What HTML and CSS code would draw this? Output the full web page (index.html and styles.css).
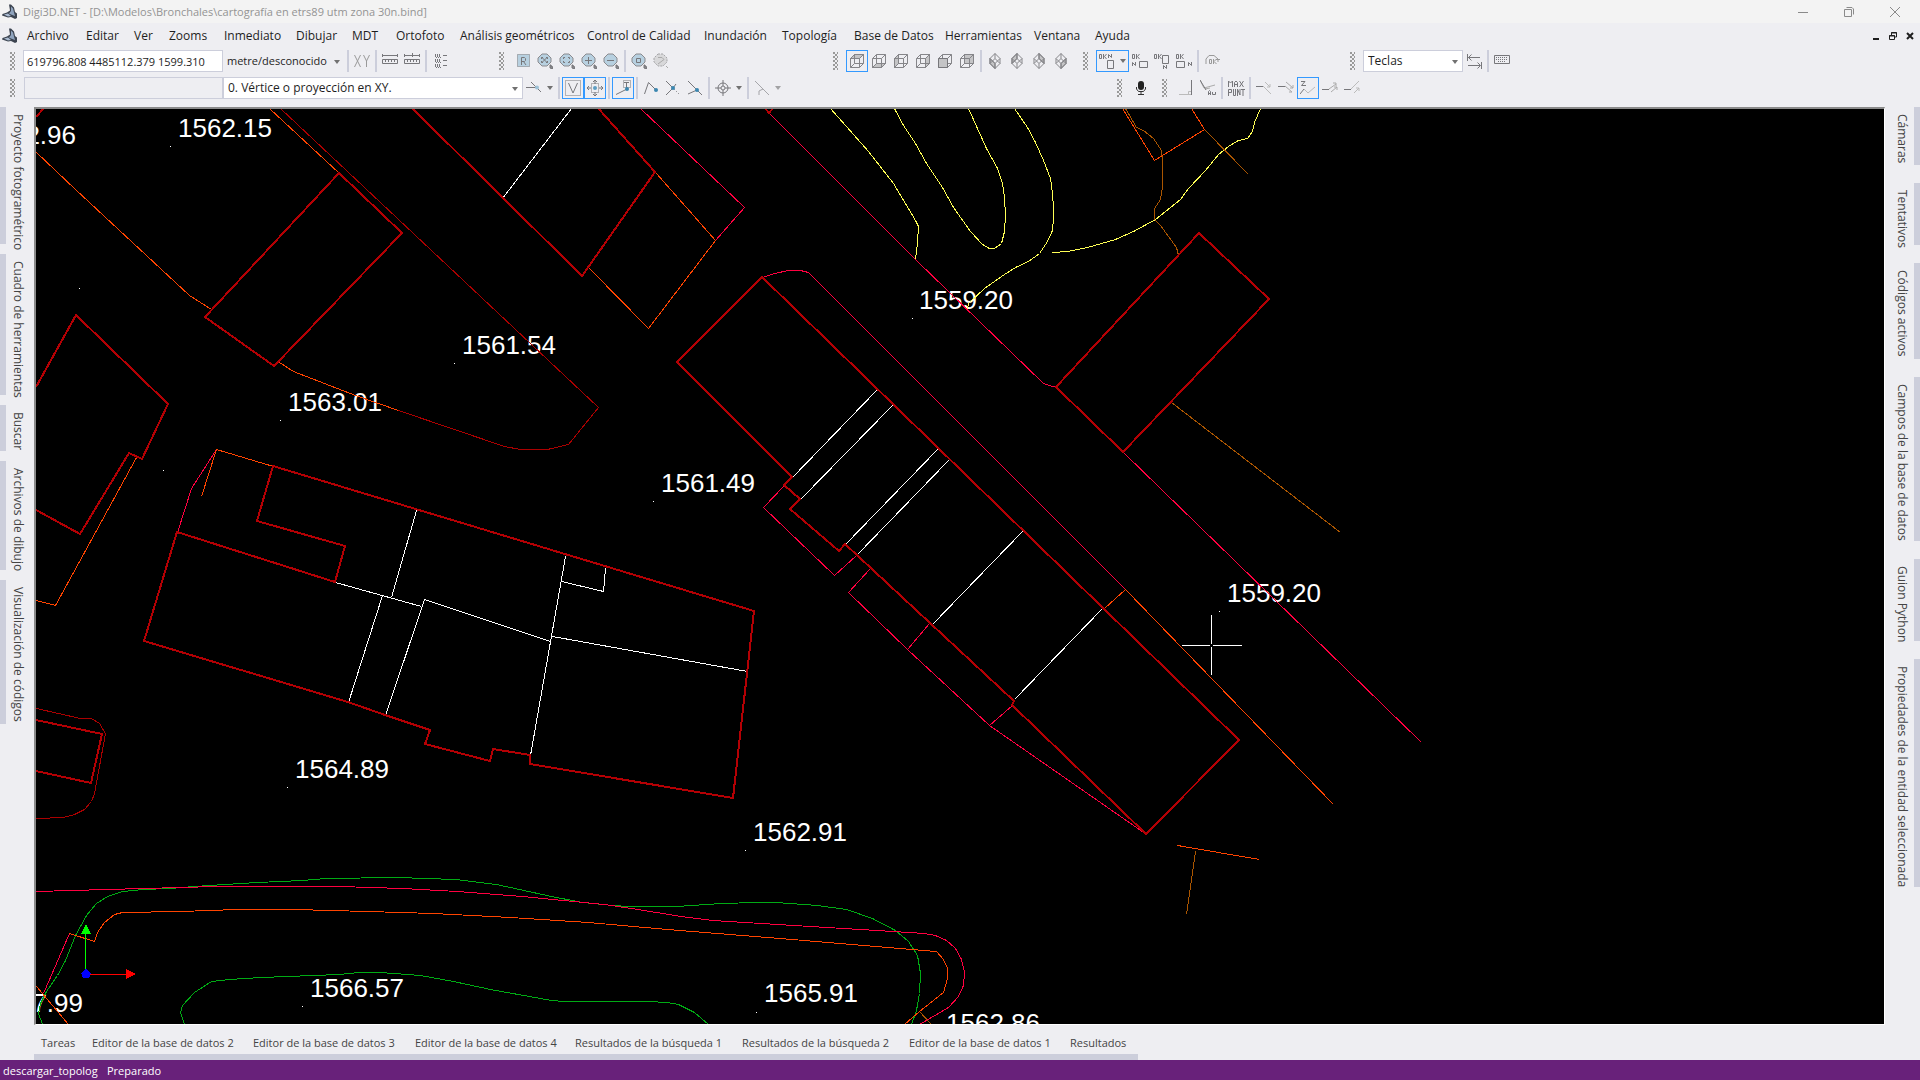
FILE: index.html
```html
<!DOCTYPE html>
<html lang="es">
<head>
<meta charset="utf-8">
<meta name="viewport" content="width=device-width, initial-scale=1">
<title>Digi3D.NET</title>
<link rel="stylesheet" href="styles.css">
</head>
<body>
<svg class="sprite" aria-hidden="true">
  <symbol id="logo" viewBox="0 0 16 16"><path d="M7 .5H9L12 3.500 13 8 15 9.500V14L13 15 9 13 6 13.500 0 11.500 .5 10 5 8.500 8 6.500Z" fill="#3c4450"/><path d="M9 2.500 11 4.500 12 8.500 13 12 9 10.500 7 9.500 9 7Z" fill="#8fa3bd"/><path d="M2 10.500 6 9.500 9 12 6 12.500Z" fill="#a9bad0"/></symbol>
  <symbol id="lens" viewBox="0 0 16 16"><path d="M5 1H10L14 5V9L10 13H5L1 9V5Z" fill="#b7d0e0" stroke="#8a8a8e"/><path d="M13 12h1v1h1v1h1v2h-2v-1h-1z" fill="#8a8a8e"/></symbol>
  <symbol id="cube" viewBox="0 0 16 16"><path d="M1.500 5.500H10.500V14.500H1.500ZM5.500 1.500H14.500V10.500H5.500ZM1.500 5.500 5.500 1.500M10.500 5.500 14.500 1.500M10.500 14.500 14.500 10.500M1.500 14.500 5.500 10.500" fill="none" stroke="#858589"/></symbol>
  <symbol id="gem" viewBox="0 0 16 16"><path d="M8 .5 13 5.500V10.500L8 15.500 3 10.500V5.500ZM3 5.500 8 10.500 13 5.500M3 10.500 8 5.500 13 10.500M8 .5V5.500M8 10.500V15.500" fill="none" stroke="#858589"/></symbol>
  <symbol id="okn" viewBox="0 0 16 16"><path d="M.5 1.500H2.500V5.500H.5ZM4.500 1V6M7.500 1 5.500 3.500 7.500 6" fill="none" stroke="#77777b"/></symbol>
</svg>

<div class="app">
  <header class="titlebar">
    <svg class="logo"><use href="#logo"/></svg>
    <span class="title">Digi3D.NET - [D:\Modelos\Bronchales\cartografía en etrs89 utm zona 30n.bind]</span>
    <div class="win">
      <button aria-label="Minimizar"><svg viewBox="0 0 12 12"><path d="M1 6.500H11"/></svg></button>
      <button aria-label="Restaurar"><svg viewBox="0 0 12 12"><path d="M1.500 3.500H8.500V10.500H1.500ZM3.500 1.500H9L10.500 3V8.500"/></svg></button>
      <button aria-label="Cerrar"><svg viewBox="0 0 12 12"><path d="M1 1 11 11M11 1 1 11"/></svg></button>
    </div>
  </header>

  <div class="menubar">
    <svg class="logo"><use href="#logo"/></svg>
    <nav class="menu">
      <button>Archivo</button><button>Editar</button><button>Ver</button><button>Zooms</button><button>Inmediato</button><button>Dibujar</button><button>MDT</button><button>Ortofoto</button><button>Análisis geométricos</button><button>Control de Calidad</button><button>Inundación</button><button>Topología</button><button>Base de Datos</button><button>Herramientas</button><button>Ventana</button><button>Ayuda</button>
    </nav>
    <div class="mdi">
      <button aria-label="Minimizar documento"><svg viewBox="0 0 10 10"><path d="M2 8H8" stroke-width="2"/></svg></button>
      <button aria-label="Restaurar documento"><svg viewBox="0 0 10 10"><path d="M1.500 4.500H6.500V8.500H1.500ZM3.500 4V1.500H8.500V6H7M1 5H7M3 2H9"/></svg></button>
      <button aria-label="Cerrar documento"><svg viewBox="0 0 10 10"><path d="M2 2 8 8M8 2 2 8" stroke-width="2"/></svg></button>
    </div>
  </div>

  <div class="tools tools-top">
    <div class="bar">
      <i class="grip"></i>
      <input class="coords" type="text" aria-label="Coordenadas" value="619796.808 4485112.379 1599.310">
      <span class="pick flat"><select aria-label="Unidades"><option>metre/desconocido</option></select></span>
      <i class="sep"></i>
      <button aria-label="XY"><svg viewBox="0 0 16 16"><path d="M.5 2 6.500 14M6.500 2 .5 14M9.500 2 12.500 8V14M15.500 2 12.500 8" stroke="#999"/></svg></button>
      <i class="sep"></i>
      <button aria-label="Regla"><svg viewBox="0 0 16 16"><path d="M0 2.500H16M.5 1V4M15.500 1V4M.5 6.500H15.500V10.500H.5ZM3.500 7V9M6.500 7V9M9.500 7V9M12.500 7V9"/></svg></button>
      <button aria-label="Regla parcial"><svg viewBox="0 0 16 16"><path d="M0 2.500H16M.5 1V4M8.500 0V4M15.500 1V4M.5 6.500H15.500V10.500H.5ZM3.500 7V9M6.500 7V9M9.500 7V9M12.500 7V9"/></svg></button>
      <i class="sep"></i>
      <button aria-label="Lista"><svg viewBox="0 0 16 16"><path d="M3 2.500H9M3 7.500H9M3 12.500H9" stroke-width="3" stroke-dasharray="1 1"/><path d="M4 4.500H9M4 9.500H9M4 14.500H9" stroke-dasharray="1 1"/><path d="M11 2.500H15M11 7.500H15M11 12.500H15"/></svg></button>
    </div>
    <div class="bar">
      <i class="grip"></i>
      <button aria-label="Redibujar"><svg viewBox="0 0 16 16"><path d="M2.500 1.500H14.500V13.500H2.500Z" fill="#b7d0e0" stroke-dasharray="1 1"/><path d="M6.500 12V4.500H9.500L10.500 5.500V7.500L9.500 8.500H6.500M8.500 8.500 11 12"/></svg></button>
      <button aria-label="Zoom extensión"><svg viewBox="0 0 16 16"><use href="#lens"/><path d="M4.500 4 10.500 10M10.500 4 4.500 10M4.500 6V4.500H6M9 4.500H10.500V6M4.500 8V9.500H6M9 9.500H10.500V8"/></svg></button>
      <button aria-label="Zoom ventana"><svg viewBox="0 0 16 16"><use href="#lens"/><path d="M4.500 6V4.500H6M9 4.500H10.500V6M4.500 8V9.500H6M9 9.500H10.500V8"/></svg></button>
      <button aria-label="Acercar"><svg viewBox="0 0 16 16"><use href="#lens"/><path d="M4 7.500H11M7.500 4V11"/></svg></button>
      <button aria-label="Alejar"><svg viewBox="0 0 16 16"><use href="#lens"/><path d="M4 7.500H11"/></svg></button>
      <i class="sep"></i>
      <button aria-label="Zoom centro"><svg viewBox="0 0 16 16"><use href="#lens"/><path d="M5.500 5.500H9.500V9.500H5.500Z"/></svg></button>
      <button aria-label="Zoom previo"><svg viewBox="0 0 16 16"><path d="M5 1H10L14 5V9L10 13H5L1 9V5Z" fill="#d8d8da" stroke="#a5a5a8" stroke-dasharray="2 1"/><path d="M5 4.500H9L11 6.500 5 11M13 13 15 15" stroke="#aaa"/></svg></button>
    </div>
    <div class="bar">
      <i class="grip"></i>
      <button class="on" aria-label="Vista superior"><svg viewBox="0 0 16 16"><path d="M1.500 5.500 5.500 1.500H14.500L10.500 5.500Z" fill="#c4c4c6"/><use href="#cube"/></svg></button>
      <button aria-label="Vista inferior"><svg viewBox="0 0 16 16"><path d="M1.500 14.500 5.500 10.500H14.500L10.500 14.500Z" fill="#c4c4c6"/><use href="#cube"/></svg></button>
      <button aria-label="Vista izquierda"><svg viewBox="0 0 16 16"><path d="M1.500 5.500 5.500 1.500V10.500L1.500 14.500Z" fill="#c4c4c6"/><use href="#cube"/></svg></button>
      <button aria-label="Vista derecha"><svg viewBox="0 0 16 16"><path d="M10.500 5.500 14.500 1.500V10.500L10.500 14.500Z" fill="#c4c4c6"/><use href="#cube"/></svg></button>
      <button aria-label="Vista frontal"><svg viewBox="0 0 16 16"><use href="#cube"/><path d="M1.500 5.500H10.500V14.500H1.500Z" fill="#c4c4c6"/></svg></button>
      <button aria-label="Vista trasera"><svg viewBox="0 0 16 16"><path d="M5.500 1.500H14.500V10.500H5.500Z" fill="#c4c4c6"/><use href="#cube"/></svg></button>
      <i class="sep"></i>
      <button aria-label="Isométrica suroeste"><svg viewBox="0 0 16 16"><path d="M3 5.500 8 10.500V15.500L3 10.500Z" fill="#c4c4c6"/><use href="#gem"/></svg></button>
      <button aria-label="Isométrica noroeste"><svg viewBox="0 0 16 16"><path d="M8 .5V5.500L3 10.500V5.500Z" fill="#c4c4c6"/><use href="#gem"/></svg></button>
      <button aria-label="Isométrica noreste"><svg viewBox="0 0 16 16"><path d="M8 .5 13 5.500V10.500L8 5.500Z" fill="#c4c4c6"/><use href="#gem"/></svg></button>
      <button aria-label="Isométrica sureste"><svg viewBox="0 0 16 16"><path d="M13 5.500V10.500L8 15.500V10.500Z" fill="#c4c4c6"/><use href="#gem"/></svg></button>
    </div>
    <div class="bar">
      <i class="grip"></i>
      <button class="on split" aria-label="Norte arriba"><svg viewBox="0 0 16 16"><use href="#okn"/><path d="M9.500 5V1.500L12.500 4.500V1M8.500 7.500H14.500V15.500H8.500Z"/></svg><b class="caret"></b></button>
      <button aria-label="Norte izquierda"><svg viewBox="0 0 16 16"><use href="#okn"/><path d="M.5 13V9.500L3.500 12.500V9M7.500 8.500H15.500V14.500H7.500Z"/></svg></button>
      <button aria-label="Norte abajo"><svg viewBox="0 0 16 16"><use href="#okn"/><path d="M8.500 2.500H14.500V10.500H8.500ZM9.500 16V12.500L12.500 15.500V12"/></svg></button>
      <button aria-label="Norte derecha"><svg viewBox="0 0 16 16"><use href="#okn"/><path d="M.5 8.500H8.500V14.500H.5ZM12.500 13V9.500L15.500 12.500V9"/></svg></button>
      <i class="sep"></i>
      <button aria-label="Girar"><svg viewBox="0 0 16 16"><path d="M2 11V6L5 2.500H10L14 6M12 6.500H16M14 6V9M5.500 6.500H7.500V10.500H5.500ZM9.500 6V11M12.500 6 10 8.500 12.500 11" stroke="#999"/></svg></button>
    </div>
    <div class="bar">
      <i class="grip"></i>
      <span class="pick keys"><select aria-label="Teclado"><option>Teclas</option></select></span>
      <button aria-label="Intercambiar"><svg viewBox="0 0 16 16"><path d="M2 4.500H14M1.500 1V8M5.500 1.500 2.500 4.500 5.500 7.500M2 12.500H14M15.500 9V16M11.500 9.500 14.500 12.500 11.500 15.500"/></svg></button>
      <i class="sep"></i>
      <button aria-label="Teclado en pantalla"><svg viewBox="0 0 16 16"><path d="M.5 2.500H15.500V10.500H.5Z"/><path d="M2 4.500H14M2 6.500H14M4 8.500H12" stroke-dasharray="1 1"/></svg></button>
    </div>
  </div>

  <div class="tools tools-bottom">
    <div class="bar">
      <i class="grip"></i>
      <input class="command" type="text" aria-label="Orden">
      <span class="pick mode"><select aria-label="Modo de proyección"><option>0. Vértice o proyección en XY.</option></select></span>
      <button class="split" aria-label="Punto final"><svg viewBox="0 0 16 16"><path d="M0 7.500H10M5 2 15 12"/><circle cx="11" cy="7.500" r="2" fill="#9fc3d8" stroke="none"/></svg><b class="caret"></b></button>
      <i class="sep"></i>
      <button class="on" aria-label="Vértices"><svg viewBox="0 0 16 16"><path d="M.5 .5H15.500V15.500H.5Z" stroke-dasharray="1 1"/><path d="M3.500 3 8 13 12.500 3"/></svg></button>
      <button class="on" aria-label="Mover"><svg viewBox="0 0 16 16"><path d="M4.500 3.500H11.500V12.500H4.500Z" stroke-dasharray="1 1"/><path d="M8 0V4M8 12V16M0 8H4M12 8H16M6 2 8 0 10 2M6 14 8 16 10 14M2 6 0 8 2 10M14 6 16 8 14 10"/><circle cx="8" cy="8" r="2" fill="#5d9ec4" stroke="none"/></svg></button>
      <i class="sep"></i>
      <button class="on" aria-label="Tentativo"><svg viewBox="0 0 16 16"><path d="M8.500 .5H15.500V7.500H8.500Z" stroke-dasharray="1 1"/><path d="M9 2.500H14M11.500 2V9M1 14.500 11 9.500"/><circle cx="12" cy="9" r="2" fill="#3a86b0" stroke="none"/></svg></button>
      <i class="sep"></i>
      <button aria-label="Extremo"><svg viewBox="0 0 16 16"><path d="M1.500 14 5.500 2.500 12 9"/><circle cx="13" cy="10" r="2" fill="#3a86b0" stroke="none"/></svg></button>
      <button aria-label="Intersección"><svg viewBox="0 0 16 16"><path d="M1 1 8 8 1 15M8 8 11 4"/><path d="M9 9 15 15" stroke-dasharray="1 2"/><circle cx="8" cy="8" r="2" fill="#3a86b0" stroke="none"/></svg></button>
      <button aria-label="Cruce"><svg viewBox="0 0 16 16"><path d="M1 1 15 15M1 14 10 10"/><circle cx="10" cy="10" r="2" fill="#3a86b0" stroke="none"/></svg></button>
      <i class="sep"></i>
      <button class="split" aria-label="Objetivo"><svg viewBox="0 0 16 16"><circle cx="8" cy="8" r="5"/><circle cx="8" cy="8" r="2"/><path d="M8 0V6M8 10V16M0 8H6M10 8H16"/></svg><b class="caret"></b></button>
      <i class="sep"></i>
      <button class="split faded" aria-label="Perpendicular"><svg viewBox="0 0 16 16"><path d="M1 1 15 15M9 9 5 11V15"/></svg><b class="caret"></b></button>
    </div>
    <div class="bar">
      <i class="grip"></i>
      <button aria-label="Micrófono"><svg viewBox="0 0 16 16"><rect x="5" y="1" width="6" height="9" rx="3" fill="#222" stroke="none"/><path d="M3.500 7V9L5.500 11.500H10.500L12.500 9V7M8 12V15M5 14.500H11" stroke="#333"/></svg></button>
    </div>
    <div class="bar">
      <i class="grip"></i>
      <button aria-label="Ángulo recto"><svg viewBox="0 0 16 16"><path d="M1 14.500H14M10.500 14V11.500H13" stroke="#bbb"/><path d="M13.500 0V15"/></svg></button>
      <button aria-label="Ángulo"><svg viewBox="0 0 16 16"><path d="M0 0 4 8 15 5M5 9 10 8" stroke="#aaa"/><path d="M0 0 6 10M8.500 15V11.500L9.500 10.500 10.500 11.500V15M8 13.500H11M12.500 12V14.500H15.500V12"/></svg></button>
      <i class="sep"></i>
      <button class="wide" aria-label="Máximo de puntos"><svg viewBox="0 0 18 16"><path d="M1.500 7V1L3.500 3 5.500 1V7M7.500 7V2.500L9 1 10.500 2.500V7M8 4.500H10M12.500 1 16.500 7M16.500 1 12.500 7M1.500 16V9.500H4.500V12.500H1.500M6.500 9V15.500H8.500V9M10.500 16V9L13 15V9M14 9.500H18M16 9V16"/></svg></button>
      <i class="sep"></i>
      <button aria-label="Cortar"><svg viewBox="0 0 16 16"><path d="M0 6.500H7"/><path d="M7 6 15 14M9 2 14 7M11 7H14V4" stroke="#bbb"/></svg></button>
      <button aria-label="Prolongar"><svg viewBox="0 0 16 16"><path d="M0 6.500H7"/><path d="M7 6 14 12M8 2 15 8M12 8H15V5M14 12H11" stroke="#aaa"/></svg></button>
      <button class="on" aria-label="Interpolar Z"><svg viewBox="0 0 16 16"><path d="M1 1.500H5L1.500 5.500H6M0 14 4 9"/><path d="M4 9 8 13 15 7" stroke="#bbb"/></svg></button>
      <button aria-label="Unir"><svg viewBox="0 0 16 16"><path d="M0 9.500H7"/><path d="M7 9 14 4M9 12 15 7M11 3H14V6M12 7H15V10" stroke="#aaa"/></svg></button>
      <button aria-label="Continuar"><svg viewBox="0 0 16 16"><path d="M0 9.500H7"/><path d="M7 9 15 1M10 13 15 8M12 8H15V11" stroke="#bbb"/></svg></button>
    </div>
  </div>

  <main class="work">
    <nav class="dock dock-left">
      <button>Proyecto fotogramétrico</button><button>Cuadro de herramientas</button><button>Buscar</button><button>Archivos de dibujo</button><button>Visualización de códigos</button>
    </nav>
    <section class="canvas">
      <svg viewBox="36 109 1848 915" preserveAspectRatio="xMinYMin slice" role="img" aria-label="Cartografía">
        <g class="spot">
          <text x="76" y="144" text-anchor="end">1562.96</text>
          <text x="178" y="137">1562.15</text>
          <text x="462" y="354">1561.54</text>
          <text x="288" y="411">1563.01</text>
          <text x="661" y="492">1561.49</text>
          <text x="919" y="309">1559.20</text>
          <text x="1227" y="602">1559.20</text>
          <text x="295" y="778">1564.89</text>
          <text x="753" y="841">1562.91</text>
          <text x="310" y="997">1566.57</text>
          <text x="764" y="1002">1565.91</text>
          <text x="83" y="1012" text-anchor="end">1567.99</text>
          <text x="946" y="1032">1562.86</text>
        </g>
        <path class="dots" d="M170 146.500h1M79 288.500h1M454 363.500h1M280 420.500h1M163 470.500h1M912 318.500h1M653 501.500h1M287 787.500h1M745 850.500h1M302 1006.500h1M756 1012.500h1M1219 611.500h1"/>
        <g class="lines" transform="translate(.5 .5)">
          <path class="yellow" d="M830 108 846 126 868 151 893 183 915 220 918 226 917 242 915 259M894 108 903 125 915 143 926 163 942 187 953 207 970 231 982 244 989 248H994L1001 243 1004 231 1005 215 1004 197 1002 183 997 168 986 148 968 108M1014 108 1027 127 1035 142 1043 160 1050 178 1052 193 1053 208V217L1052 230 1047 241 1039 253 1028 261 1015 267 1001 276 984 288 968 303 967 309M1052 252 1067 251 1087 247 1115 239 1133 231 1155 219 1180 199 1188 188 1205 170 1218 154 1228 146 1238 140 1247 138 1252 131 1254 122 1260 108"/>
          <path class="brown" d="M1125 108 1136 127 1143 130 1153 138 1161 150 1162 160V186L1160 199 1154 208V219L1160 225 1176 247 1178 255M1204 129 1248 174M1171 402 1340 532M1195 851 1186 914M919 1011 931 1024"/>
          <path class="green" d="M42 1024 38 1013 40 1003 46 991 57 975 65 960 75 935 86 915 96 903 107 896 122 891 143 889 169 888 194 886 224 884 257 882 302 880 326 878 396 877 455 879 496 884 551 896 582 902 612 905 629 906H676L721 903 756 902H776L817 905 846 909 872 918 895 930 908 941 917 955 920 973 919 993 916 1010 911 1024M184 1024 180 1012 182 1005 194 992 211 981 229 979 261 977 339 974 359 972H380L420 975 453 981 490 989 551 1000 563 1001H647L667 1002 678 1004 694 1012 708 1024"/>
          <path class="crimson" d="M640 108 744 207 715 240M216 449 191 488 177 532M762 277 774 273 788 270H800L808 272 1125 589M784 485 763 507 834 575 856 555M870 568 848 592 907 649 989 725 1146 834M907 649 929 623M989 725 1012 705M769 113 915 259 1043 383 1049 385 1056 387M1123 452 1421 742M36 891 71 890 143 888 216 886H339L402 888 457 891 522 896 604 904 631 908 681 916 712 920 810 926 893 931 924 933 935 935 946 940 955 948 961 959 964 972 963 985 958 996 948 1007 931 1017 919 1024M69 933 43 993"/>
          <path class="orange" d="M36 152 75 189 189 295 211 309M269 108 339 173M656 173 715 240 648 328 589 268M398 410 355 395 293 371 279 362M273 466 216 449 201 496M136 457 55 605 36 600M1104 608 1125 589 1333 804M1122 108 1154 160 1204 129 1191 108M1177 845 1259 859M69 933 94 941 97 932 104 922 114 914 122 912 180 911 237 909H294L367 911 433 913 510 917 588 922 667 929 792 939 899 948 936 951 943 959 947 968V978L943 992 919 1011 904 1024M36 986 68 1024"/>
          <path class="thin" d="M280 108 598 407 568 444 547 449H520L504 446 398 410M36 708 80 718H91L99 723 105 733 94 793 91 801 84 809 74 814 63 817 36 818"/>
          <path class="white" d="M571 108 502 198M416 510 391 597M335 582 421 606M382 595 348 702M385 715 424 599 550 641M565 556 530 755M561 581 603 591 605 568M552 636 747 671M877 389 792 477M892 405 800 499M938 448 845 544M948 460 856 555M1022 531 931 625M1102 608 1014 699"/>
        </g>
        <path class="wall" d="M36 117 44 108M339 173 402 233 274 366 205 317ZM36 387 76 315 168 404 142 459 129 453 80 534 36 510M412 108 582 276 655 172 598 108M273 466 754 611 733 798 530 764V755L493 749 490 761 425 744 430 730 385 715 348 702 144 641 177 532 335 582 345 546 257 521ZM36 720 102 734 91 783 36 771M762 277 677 362 792 477 784 485 800 499 790 509 839 551 845 544 930 623 1014 701 1012 705 1146 834 1239 740ZM765 108 769 113 773 108M1056 387 1199 233 1269 299 1123 452Z"/>
        <g class="axes">
          <path d="M85.500 974V930" stroke="#0f0"/><path d="M81 934 86 924 91 934Z" fill="#0f0"/>
          <path d="M86 974.500H128" stroke="red"/><path d="M126 969 136 974 126 979Z" fill="red"/>
          <path d="M86 969 91 973 89 978H83L81 973Z" fill="#00f"/>
        </g>
        <path class="cross" d="M1182 645.500H1210M1213 645.500H1242M1211.500 615V644M1211.500 647V675"/>
      </svg>
    </section>
    <nav class="dock dock-right">
      <button>Cámaras</button><button>Tentativos</button><button>Códigos activos</button><button>Campos de la base de datos</button><button>Guion Python</button><button>Propiedades de la entidad seleccionada</button>
    </nav>
  </main>

  <nav class="panels">
    <button>Tareas</button><button>Editor de la base de datos 2</button><button>Editor de la base de datos 3</button><button>Editor de la base de datos 4</button><button>Resultados de la búsqueda 1</button><button>Resultados de la búsqueda 2</button><button>Editor de la base de datos 1</button><button>Resultados</button>
  </nav>

  <footer class="status"><span class="task">descargar_topolog</span><span>Preparado</span></footer>
</div>
</body>
</html>
```

FILE: styles.css
```css
* { box-sizing: border-box; }

body {
  margin: 0;
  background: #eeeef2;
  color: #1e1e1e;
  font: 12px/16px "Open Sans", "Noto Sans", sans-serif;
}

button, input, select {
  margin: 0;
  padding: 0;
  border: 0;
  border-radius: 0;
  background: none;
  color: inherit;
  font: inherit;
}

svg { display: block; fill: none; }
.sprite { position: absolute; width: 0; height: 0; }

.app { display: flex; flex-direction: column; min-height: 100vh; }

/* Title and menu */
.titlebar {
  display: flex;
  align-items: center;
  height: 23px;
  padding: 0 2px;
  background: #f3f3f3;
  color: #949494;
}
.logo { flex: none; width: 16px; height: 16px; }
.title { flex: 1; padding: 1px 0 0 5px; font-size: 11px; white-space: nowrap; }
.win { display: flex; }
.win button { display: grid; place-items: center; width: 46px; height: 22px; }
.win svg { width: 12px; height: 12px; stroke: #8a8a8a; }

.menubar { display: flex; align-items: center; height: 26px; padding: 0 3px 0 2px; }
.menu {
  flex: 1;
  display: grid;
  grid-template-columns: 59px 48px 35px 55px 72px 56px 44px 64px 127px 117px 78px 72px 91px 89px 61px auto;
  padding-left: 9px;
}
.menu button { text-align: left; white-space: nowrap; }
.mdi { display: flex; gap: 2px; }
.mdi button { display: grid; place-items: center; width: 15px; height: 16px; }
.mdi svg { width: 10px; height: 10px; stroke: #1e1e1e; }

/* Toolbars */
.tools { display: grid; padding-left: 7px; align-items: center; }
.tools-top { grid-template-columns: 489px 334px 250px 267px 1fr; height: 25px; padding-bottom: 1px; }
.tools-bottom { grid-template-columns: 1107px 45px 1fr; height: 33px; padding-bottom: 6px; }
.bar { display: flex; align-items: center; }
.bar > * { flex: none; }
.grip {
  width: 5px;
  height: 18px;
  margin: 0 8px 0 3px;
  background: radial-gradient(circle at 1px 1px, #999 1px, transparent 1px) 0 0 / 4px 4px,
              radial-gradient(circle at 1px 1px, #999 1px, transparent 1px) 2px 2px / 4px 4px;
}
.sep { width: 2px; height: 22px; margin: 0 2px; background: #cccedb; }
.bar button { display: flex; align-items: center; justify-content: center; width: 22px; height: 22px; }
.bar button svg { flex: none; width: 16px; height: 16px; stroke: #77777b; }
.bar button.wide svg { width: 18px; }
.bar button.split { width: 33px; gap: 5px; }
.bar button.on { border: 1px solid #3399ff; }
.faded { opacity: .6; }
.caret, .pick::after {
  border: 3px solid transparent;
  border-top: 4px solid #717171;
  border-bottom: 0;
}

.coords, .command { height: 22px; padding: 0 3px; border: 1px solid #cccedb; }
.coords { width: 200px; background: #fff; font-size: 11px; }
.command { width: 199px; margin-left: 1px; }
.pick { position: relative; height: 22px; border: 1px solid #cccedb; background: #fff; }
.pick select { width: 100%; height: 20px; padding-left: 4px; appearance: none; outline: 0; }
.pick::after { content: ""; position: absolute; top: 9px; right: 4px; pointer-events: none; }
.pick.flat { width: 122px; border-color: transparent; background: none; font-size: 11px; }
.pick.flat select { padding-left: 3px; }
.pick.mode { width: 300px; }
.pick.keys { width: 100px; }

/* Docks round the drawing */
.work { flex: 1; display: grid; grid-template-columns: 34px 1fr 35px; min-height: 0; }
.dock { display: grid; align-content: start; color: #444; }
.dock button {
  padding: 7px 0;
  writing-mode: vertical-rl;
  text-align: left;
  white-space: nowrap;
  line-height: 24px;
}
.dock-left { grid-template-rows: 137px 141px 46px 109px 144px; row-gap: 10px; justify-content: start; }
.dock-left button { border-left: 6px solid #cccedb; }
.dock-right { grid-template-rows: 58px 62px 96px 164px 82px 228px; row-gap: 18px; justify-content: end; }
.dock-right button { border-right: 6px solid #cccedb; }

/* Drawing */
.canvas {
  position: relative;
  min-height: 300px;
  border: solid;
  border-width: 2px 1px 1px 2px;
  border-color: #8a8a8a #fff #fff #8a8a8a;
  background: #000;
  overflow: hidden;
}
.canvas svg { position: absolute; width: 100%; height: 100%; }
.spot { fill: #fff; font: 26px "Liberation Sans", sans-serif; }
.lines, .dots, .axes, .cross, .wall { shape-rendering: crispEdges; }
.dots, .cross, .white { stroke: #fff; }
.yellow { stroke: #ffff55; }
.brown { stroke: #aa5500; }
.green { stroke: #00aa14; }
.crimson { stroke: #ff0040; }
.orange { stroke: #ff4400; }
.thin { stroke: #aa0000; }
.wall { stroke: #b40004; stroke-width: 2px; }

/* Bottom panels and status */
.panels {
  display: grid;
  grid-template-columns: 51px 161px 162px 160px 167px 167px 161px 75px;
  height: 35px;
  padding-left: 34px;
  color: #444;
  font-size: 11px;
}
.panels button { padding: 6px 0 0 7px; border-bottom: 6px solid #cccedb; text-align: left; white-space: nowrap; }
.status {
  display: flex;
  align-items: center;
  gap: 7px;
  height: 20px;
  padding: 2px 0 0 3px;
  background: #68217a;
  color: #fff;
  font-size: 11px;
}
.task { width: 97px; overflow: hidden; white-space: nowrap; }
```
